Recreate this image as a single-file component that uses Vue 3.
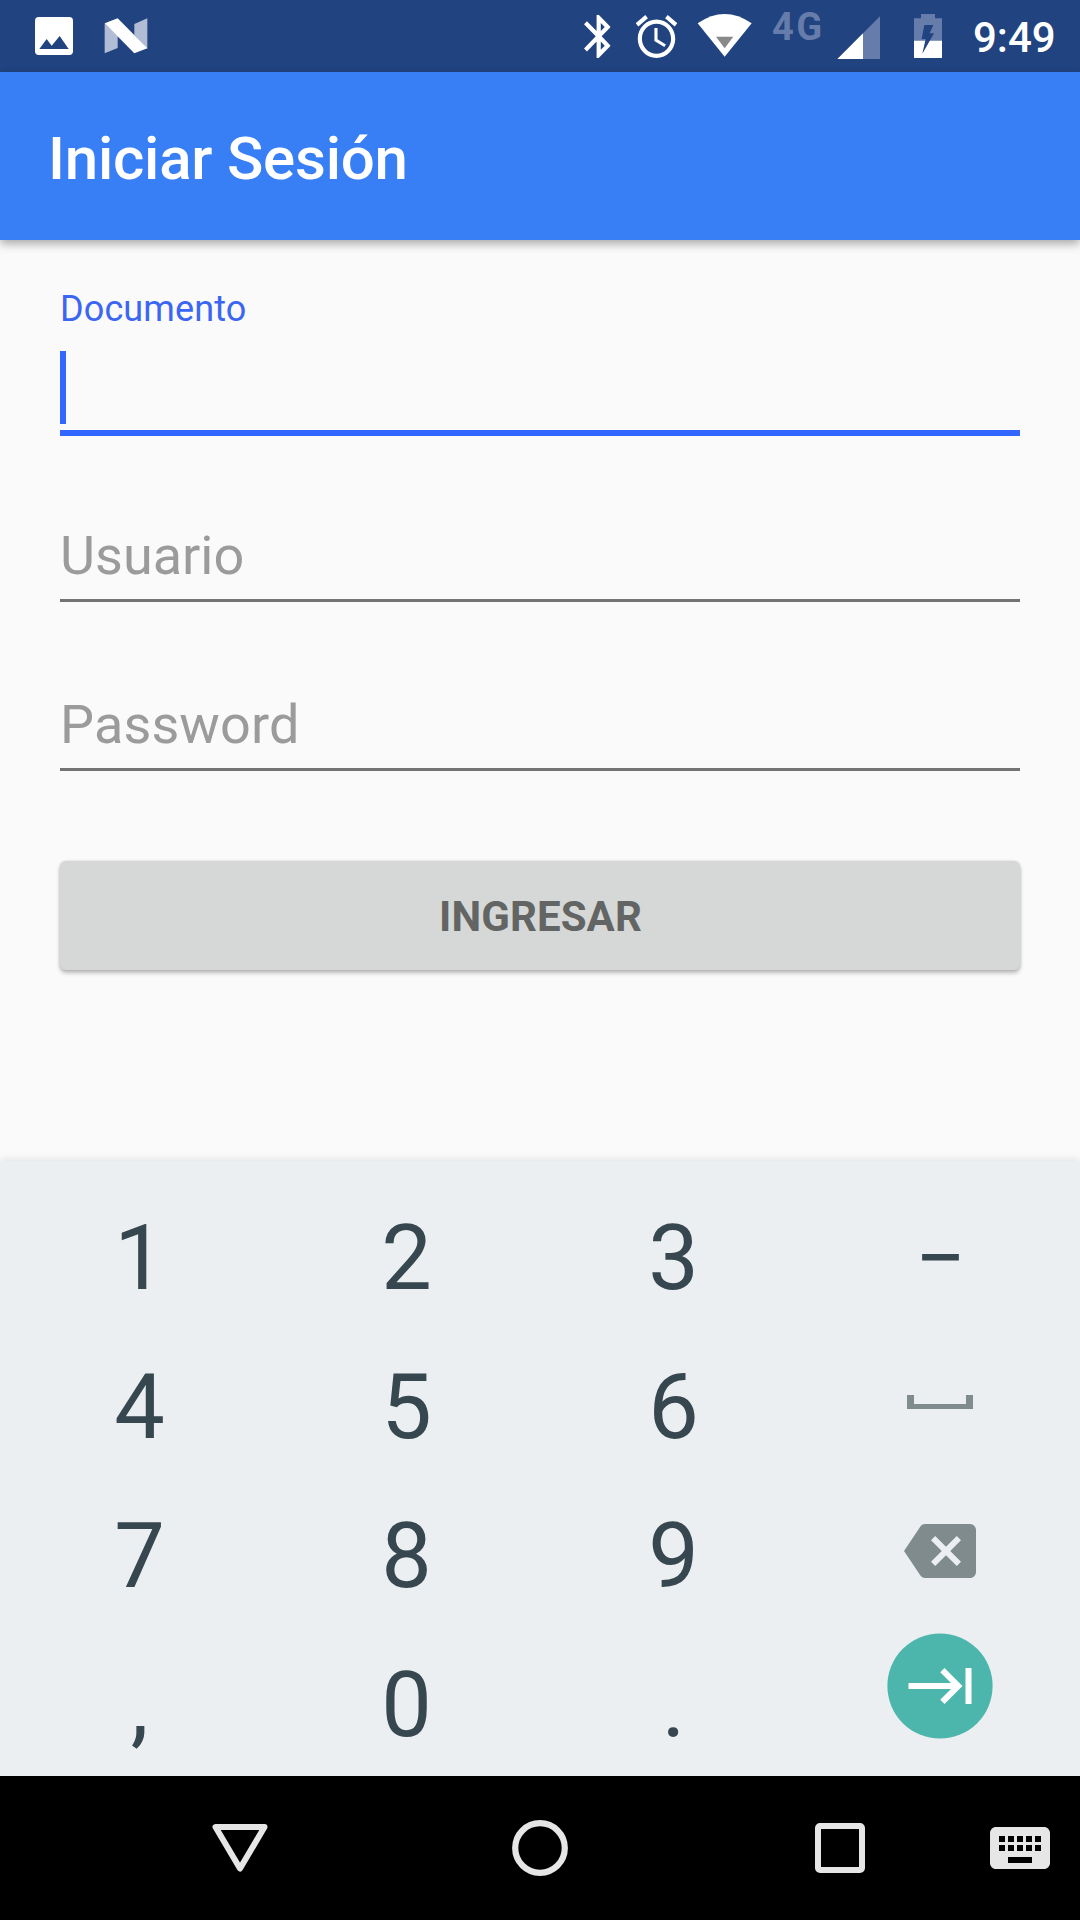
<script setup>
const rows = [
  ['1', '2', '3', '−'],
  ['4', '5', '6', 'space'],
  ['7', '8', '9', 'backspace'],
  [',', '0', '.', 'next'],
]
const keys = rows.flat()
</script>

<template>
  <div class="screen">
    <header class="status">
      <svg class="ic-image" width="38" height="72" viewBox="105 0 114 216">
        <rect x="105" y="51" width="114" height="114" rx="11" fill="#fff" />
        <path d="M118 147L140 117L155 137L179 108L206 147Z" fill="#21437f" />
      </svg>
      <svg class="ic-n" width="44" height="72" viewBox="312 0 132 216">
        <path d="M314 70L353 108V144L314 160ZM403 72L442 55V147L403 106Z" fill="#b1bdd4" />
        <path d="M314 70L353 55L442 145L403 160Z" fill="#fff" />
      </svg>
      <svg class="ic-bt" width="28" height="72" viewBox="72 0 84 216">
        <svg x="72" y="44" width="80" height="130" viewBox="5 2 12.71 20" preserveAspectRatio="none">
          <path fill="#fff" d="M17.71 7.71L12 2h-1v7.59L6.41 5 5 6.41 10.59 12 5 17.59 6.41 19 11 14.41V22h1l5.71-5.71-4.3-4.29 4.3-4.29zM13 5.83l1.88 1.88L13 9.59V5.83zm1.88 10.46L13 18.17v-3.76l1.88 1.88z" />
        </svg>
      </svg>
      <svg class="ic-alarm" width="43" height="72" viewBox="225 0 129 216">
        <svg x="227" y="45" width="125" height="129" viewBox="2 1.86 20 20.14" preserveAspectRatio="none">
          <path fill="#fff" d="M22 5.72l-4.6-3.86-1.29 1.53 4.6 3.86L22 5.72zM7.88 3.39L6.6 1.86 2 5.71l1.29 1.53 4.59-3.85zM12.5 8H11v6l4.75 2.85.75-1.23-4-2.37V8zM12 4c-4.97 0-9 4.03-9 9s4.02 9 9 9c4.97 0 9-4.03 9-9s-4.03-9-9-9zm0 16c-3.87 0-7-3.13-7-7s3.13-7 7-7 7 3.13 7 7-3.13 7-7 7z" />
        </svg>
      </svg>
      <svg class="ic-wifi" width="55" height="72" viewBox="411 0 165 216">
        <path d="M413 70Q494 14 575 70L494 170Z" fill="#fff" />
        <path d="M468 110H520L494 145Z" fill="#898989" />
      </svg>
      <span class="net">4G</span>
      <svg class="ic-signal" width="43" height="72" viewBox="831 0 129 216">
        <path d="M909 100L960 49V177H909Z" fill="#667dab" />
        <path d="M832 177L909 100V177Z" fill="#fff" />
      </svg>
      <svg class="ic-battery" width="28" height="72" viewBox="1062 0 84 216">
        <path d="M1062 122V55H1083V42H1125V55H1146V122Z" fill="#667dab" />
        <path d="M1062 122H1146V174H1062Z" fill="#fff" />
        <path d="M1093 75H1120L1109 100H1122L1087 161L1097 117H1085Z" fill="#21437f" />
      </svg>
      <span class="time">9:49</span>
    </header>

    <div class="appbar"><h1>Iniciar Sesión</h1></div>

    <main class="form">
      <div class="field active">
        <label>Documento</label>
        <div class="caret"></div>
      </div>
      <div class="field">Usuario</div>
      <div class="field second">Password</div>
      <button class="submit">INGRESAR</button>
    </main>

    <section class="keyboard">
      <div v-for="k in keys" :key="k" class="key">
        <svg v-if="k === 'space'" class="k-space" width="66" height="14" viewBox="0 0 66 14">
          <path d="M0 0H7V9H59V0H66V14H0Z" fill="#808b8e" />
        </svg>
        <svg v-else-if="k === 'backspace'" class="k-back" width="72" height="72" viewBox="0 0 24 24">
          <path fill="#808b8e" d="M22 3H7c-.69 0-1.23.35-1.59.88L0 12l5.41 8.11c.36.53.9.89 1.59.89h15c1.1 0 2-.9 2-2V5c0-1.1-.9-2-2-2zm-3 12.59L17.59 17 14 13.41 10.41 17 9 15.59 12.59 12 9 8.41 10.41 7 14 10.59 17.59 7 19 8.41 15.41 12 19 15.59z" />
        </svg>
        <svg v-else-if="k === 'next'" class="k-next" width="106" height="106" viewBox="0 0 106 106">
          <circle cx="53" cy="53" r="52.6" fill="#4db6ac" />
          <path transform="translate(18.5 17) scale(3)" fill="#fff" d="M11.59 7.41L15.17 11H1v2h14.17l-3.59 3.59L13 18l6-6-6-6-1.41 1.41zM20 6v12h2V6h-2z" />
        </svg>
        <template v-else>{{ k }}</template>
      </div>
    </section>

    <nav class="navbar">
      <svg width="72" height="72" viewBox="0 0 72 72">
        <path d="M11.5 15H60.5L36 56.5Z" fill="none" stroke="#e6e6e6" stroke-width="6" stroke-linejoin="round" />
      </svg>
      <svg width="72" height="72" viewBox="0 0 72 72">
        <circle cx="36" cy="36" r="24.8" fill="none" stroke="#e6e6e6" stroke-width="6.2" />
      </svg>
      <svg width="72" height="72" viewBox="0 0 72 72">
        <path fill="#e6e6e6" fill-rule="evenodd" d="M16 11H56a5 5 0 0 1 5 5V56a5 5 0 0 1-5 5H16a5 5 0 0 1-5-5V16a5 5 0 0 1 5-5ZM17 17V55H55V17Z" />
      </svg>
      <svg class="ime" width="72" height="72" viewBox="0 0 24 24">
        <path fill="#e6e6e6" d="M20 5H4c-1.1 0-1.99.9-1.99 2L2 17c0 1.1.9 2 2 2h16c1.1 0 2-.9 2-2V7c0-1.1-.9-2-2-2zm-9 3h2v2h-2V8zm0 3h2v2h-2v-2zM8 8h2v2H8V8zm0 3h2v2H8v-2zm-1 2H5v-2h2v2zm0-3H5V8h2v2zm9 7H8v-2h8v2zm0-4h-2v-2h2v2zm0-3h-2V8h2v2zm3 3h-2v-2h2v2zm0-3h-2V8h2v2z" />
      </svg>
    </nav>
  </div>
</template>

<style>
body {
  margin: 0;
}
</style>

<style scoped>
.screen {
  width: 1080px;
  height: 1920px;
  display: flex;
  flex-direction: column;
  overflow: hidden;
  background: #fafafa;
  font-family: Roboto, "Liberation Sans", sans-serif;
}
svg {
  display: block;
  flex: none;
}
.status {
  height: 72px;
  flex: none;
  display: flex;
  padding-left: 35px;
  background: #21437f;
  color: #fff;
  white-space: nowrap;
}
.ic-n { margin-left: 31px; }
.ic-bt { margin-left: 436px; }
.ic-alarm { margin-left: 23px; }
.ic-wifi { margin-left: 19px; }
.net {
  flex: none;
  width: 65px;
  margin-left: 20px;
  font-size: 38px;
  font-weight: 700;
  line-height: 54px;
  letter-spacing: 2.5px;
  color: #667dab;
}
.ic-battery { margin-left: 34px; }
.time {
  margin-left: 31px;
  font-size: 42px;
  font-weight: 500;
  line-height: 75px;
}
.appbar {
  height: 168px;
  flex: none;
  display: flex;
  align-items: center;
  padding-left: 48px;
  background: #387ef5;
  box-shadow: 0 4px 9px rgba(0, 0, 0, 0.32);
}
h1 {
  margin: 5px 0 0;
  color: #fff;
  font-size: 60px;
  font-weight: 500;
  line-height: 70px;
  letter-spacing: -0.22px;
}
.form {
  height: 873px;
  flex: none;
  padding: 48px 60px 0;
  display: flex;
  flex-direction: column;
}
.field {
  margin-top: 87px;
  padding-bottom: 11px;
  border-bottom: 3px solid #737373;
  color: #9b9b9b;
  font-size: 54px;
  line-height: 65px;
}
.field.second {
  margin-top: 90px;
  letter-spacing: 0.12px;
}
.field.active {
  margin-top: 0;
  padding-bottom: 6px;
  border-bottom: 6px solid #3366ff;
}
label {
  display: block;
  color: #3a66f3;
  font-size: 36px;
  line-height: 42px;
  letter-spacing: 0.12px;
}
.caret {
  width: 6px;
  height: 73px;
  margin-top: 21px;
  background: #3366ff;
}
.submit {
  height: 109px;
  margin-top: 90px;
  padding: 2px 0 0 1px;
  border: 0;
  border-radius: 6px;
  background: #d6d8d7;
  box-shadow: 0 3px 4px rgba(0, 0, 0, 0.26), 0 0 3px rgba(0, 0, 0, 0.12);
  color: #626563;
  font-family: inherit;
  font-size: 42px;
  font-weight: 700;
  letter-spacing: 0.1px;
}
.keyboard {
  height: 615px;
  flex: none;
  box-sizing: border-box;
  padding: 38px 6px 0;
  display: grid;
  grid-template-columns: repeat(4, 267px);
  grid-auto-rows: 120px;
  row-gap: 29px;
  align-content: start;
  background: #ebeff2;
  box-shadow: 0 0 9px rgba(0, 0, 0, 0.13);
  color: #37474f;
  font-size: 90px;
  line-height: 120px;
}
.key {
  display: flex;
  justify-content: center;
  align-items: flex-start;
}
.key svg { margin-right: 2px; }
.k-space { margin-top: 47px; }
.k-back { margin-top: 18px; }
.k-next { margin-top: -13px; }
.navbar {
  height: 144px;
  flex: none;
  display: flex;
  align-items: center;
  gap: 228px;
  padding-left: 204px;
  background: #000;
}
.ime { margin-left: -120px; }
</style>
